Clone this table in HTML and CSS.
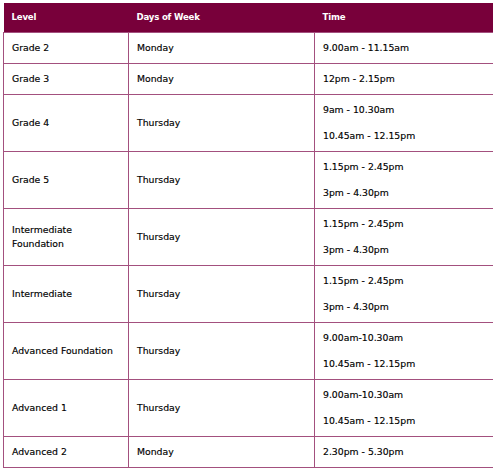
FILE: index.html
```html
<!DOCTYPE html>
<html>
<head>
<meta charset="utf-8">
<link rel="stylesheet" href="styles.css">
</head>
<body>
<table class="schedule">
  <colgroup>
    <col class="c-level">
    <col class="c-days">
    <col class="c-time">
  </colgroup>
  <thead>
    <tr><th>Level</th><th>Days of Week</th><th>Time</th></tr>
  </thead>
  <tbody>
    <tr><td>Grade 2</td><td>Monday</td><td><p>9.00am - 11.15am</p></td></tr>
    <tr><td>Grade 3</td><td>Monday</td><td><p>12pm - 2.15pm</p></td></tr>
    <tr><td>Grade 4</td><td>Thursday</td><td><p>9am - 10.30am</p><p>10.45am - 12.15pm</p></td></tr>
    <tr><td>Grade 5</td><td>Thursday</td><td><p>1.15pm - 2.45pm</p><p>3pm - 4.30pm</p></td></tr>
    <tr><td>Intermediate Foundation</td><td>Thursday</td><td><p>1.15pm - 2.45pm</p><p>3pm - 4.30pm</p></td></tr>
    <tr><td>Intermediate</td><td>Thursday</td><td><p>1.15pm - 2.45pm</p><p>3pm - 4.30pm</p></td></tr>
    <tr><td>Advanced Foundation</td><td>Thursday</td><td><p>9.00am-10.30am</p><p>10.45am - 12.15pm</p></td></tr>
    <tr><td>Advanced 1</td><td>Thursday</td><td><p>9.00am-10.30am</p><p>10.45am - 12.15pm</p></td></tr>
    <tr><td>Advanced 2</td><td>Monday</td><td><p>2.30pm - 5.30pm</p></td></tr>
  </tbody>
</table>
</body>
</html>
```
FILE: styles.css
```css
html, body { background: #ffffff; }
body {
  margin: 3px;
  font-family: "DejaVu Sans", "Noto Sans", sans-serif;
  color: #000000;
}
.schedule {
  width: 491px;
  border-collapse: collapse;
  table-layout: fixed;
  font-size: 9.3px;
}
.c-level { width: 125px; }
.c-days { width: 186px; }
.c-time { width: 180px; }
.schedule th {
  background: #78003a;
  color: #ffffff;
  font-weight: 700;
  font-size: 8.6px;
  text-align: left;
  height: 29px;
  padding: 0 8px;
  box-sizing: border-box;
  letter-spacing: -0.2px;
}
.schedule td {
  border: 1px solid #a3507e;
  padding: 8px 8px;
  line-height: 14px;
  vertical-align: middle;
  -webkit-text-stroke: 0.15px #000000;
}
.schedule td p { margin: 0; }
.schedule td p + p { margin-top: 12px; }
```
